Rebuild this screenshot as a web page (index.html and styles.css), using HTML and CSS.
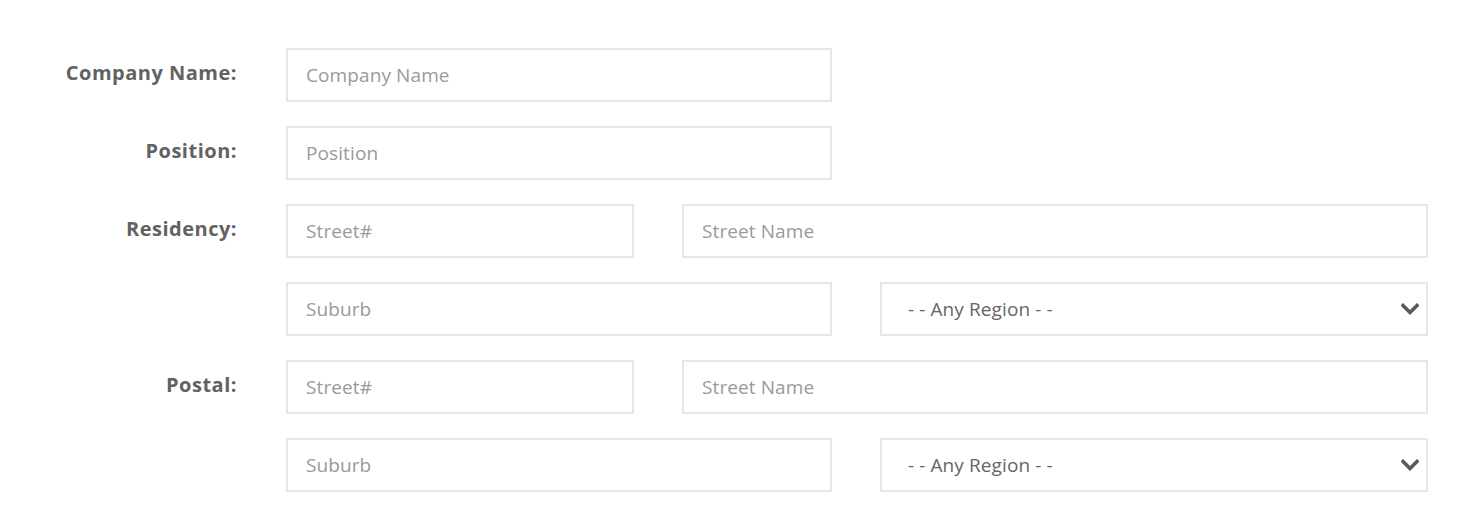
FILE: index.html
```html
<!DOCTYPE html>
<html lang="en">
<head>
<meta charset="utf-8">
<title>Details</title>
<link rel="stylesheet" href="styles.css">
</head>
<body>
<form class="form">
  <div class="row">
    <label class="label">Company Name:</label>
    <div class="fields half">
      <input class="field" type="text" placeholder="Company Name">
    </div>
  </div>
  <div class="row">
    <label class="label">Position:</label>
    <div class="fields half">
      <input class="field" type="text" placeholder="Position">
    </div>
  </div>
  <div class="row">
    <label class="label">Residency:</label>
    <div class="fields street">
      <input class="field" type="text" placeholder="Street#">
      <input class="field" type="text" placeholder="Street Name">
    </div>
  </div>
  <div class="row">
    <div class="label"></div>
    <div class="fields split">
      <input class="field" type="text" placeholder="Suburb">
      <div class="select-wrap">
        <select class="select">
          <option>- - Any Region - -</option>
        </select>
        <svg class="chevron" viewBox="0 0 18 12" width="18" height="12" aria-hidden="true"><path d="M2 2.5 L9 9.5 L16 2.5" fill="none" stroke="#5a5a5a" stroke-width="3.6" stroke-linecap="square"/></svg>
      </div>
    </div>
  </div>
  <div class="row">
    <label class="label">Postal:</label>
    <div class="fields street">
      <input class="field" type="text" placeholder="Street#">
      <input class="field" type="text" placeholder="Street Name">
    </div>
  </div>
  <div class="row">
    <div class="label"></div>
    <div class="fields split">
      <input class="field" type="text" placeholder="Suburb">
      <div class="select-wrap">
        <select class="select">
          <option>- - Any Region - -</option>
        </select>
        <svg class="chevron" viewBox="0 0 18 12" width="18" height="12" aria-hidden="true"><path d="M2 2.5 L9 9.5 L16 2.5" fill="none" stroke="#5a5a5a" stroke-width="3.6" stroke-linecap="square"/></svg>
      </div>
    </div>
  </div>
</form>
</body>
</html>
```

FILE: styles.css
```css
html, body {
  margin: 0;
  padding: 0;
  background: #ffffff;
}

body {
  font-family: "Open Sans", "Liberation Sans", sans-serif;
  font-size: 18px;
  color: #666666;
}

.form {
  padding: 48px 0 0 0;
  width: 1428px;
}

.row {
  display: grid;
  grid-template-columns: 237px 1fr;
  column-gap: 49px;
  margin-bottom: 24px;
}

.label {
  text-align: right;
  font-weight: 700;
  font-size: 20px;
  letter-spacing: 0.5px;
  line-height: 27px;
  padding-top: 11px;
  color: #626262;
}

.fields {
  display: grid;
  column-gap: 48px;
}

.half {
  grid-template-columns: 546px;
}

.street {
  grid-template-columns: 348px 1fr;
}

.split {
  grid-template-columns: 546px 1fr;
}

.field,
.select {
  box-sizing: border-box;
  height: 54px;
  width: 100%;
  margin: 0;
  border: 2px solid #e6e6e6;
  border-radius: 0;
  background: #ffffff;
  font-family: "Open Sans", "Liberation Sans", sans-serif;
  font-size: 19px;
  letter-spacing: 0.1px;
  color: #666666;
  outline: none;
}

.field {
  padding: 0 18px;
}

.field::placeholder {
  color: #9a9a9a;
  opacity: 1;
}

.select-wrap {
  position: relative;
}

.select {
  appearance: none;
  -webkit-appearance: none;
  padding: 0 40px 0 26px;
  color: #666666;
}

.chevron {
  position: absolute;
  right: 9px;
  top: 21px;
  pointer-events: none;
}
```
